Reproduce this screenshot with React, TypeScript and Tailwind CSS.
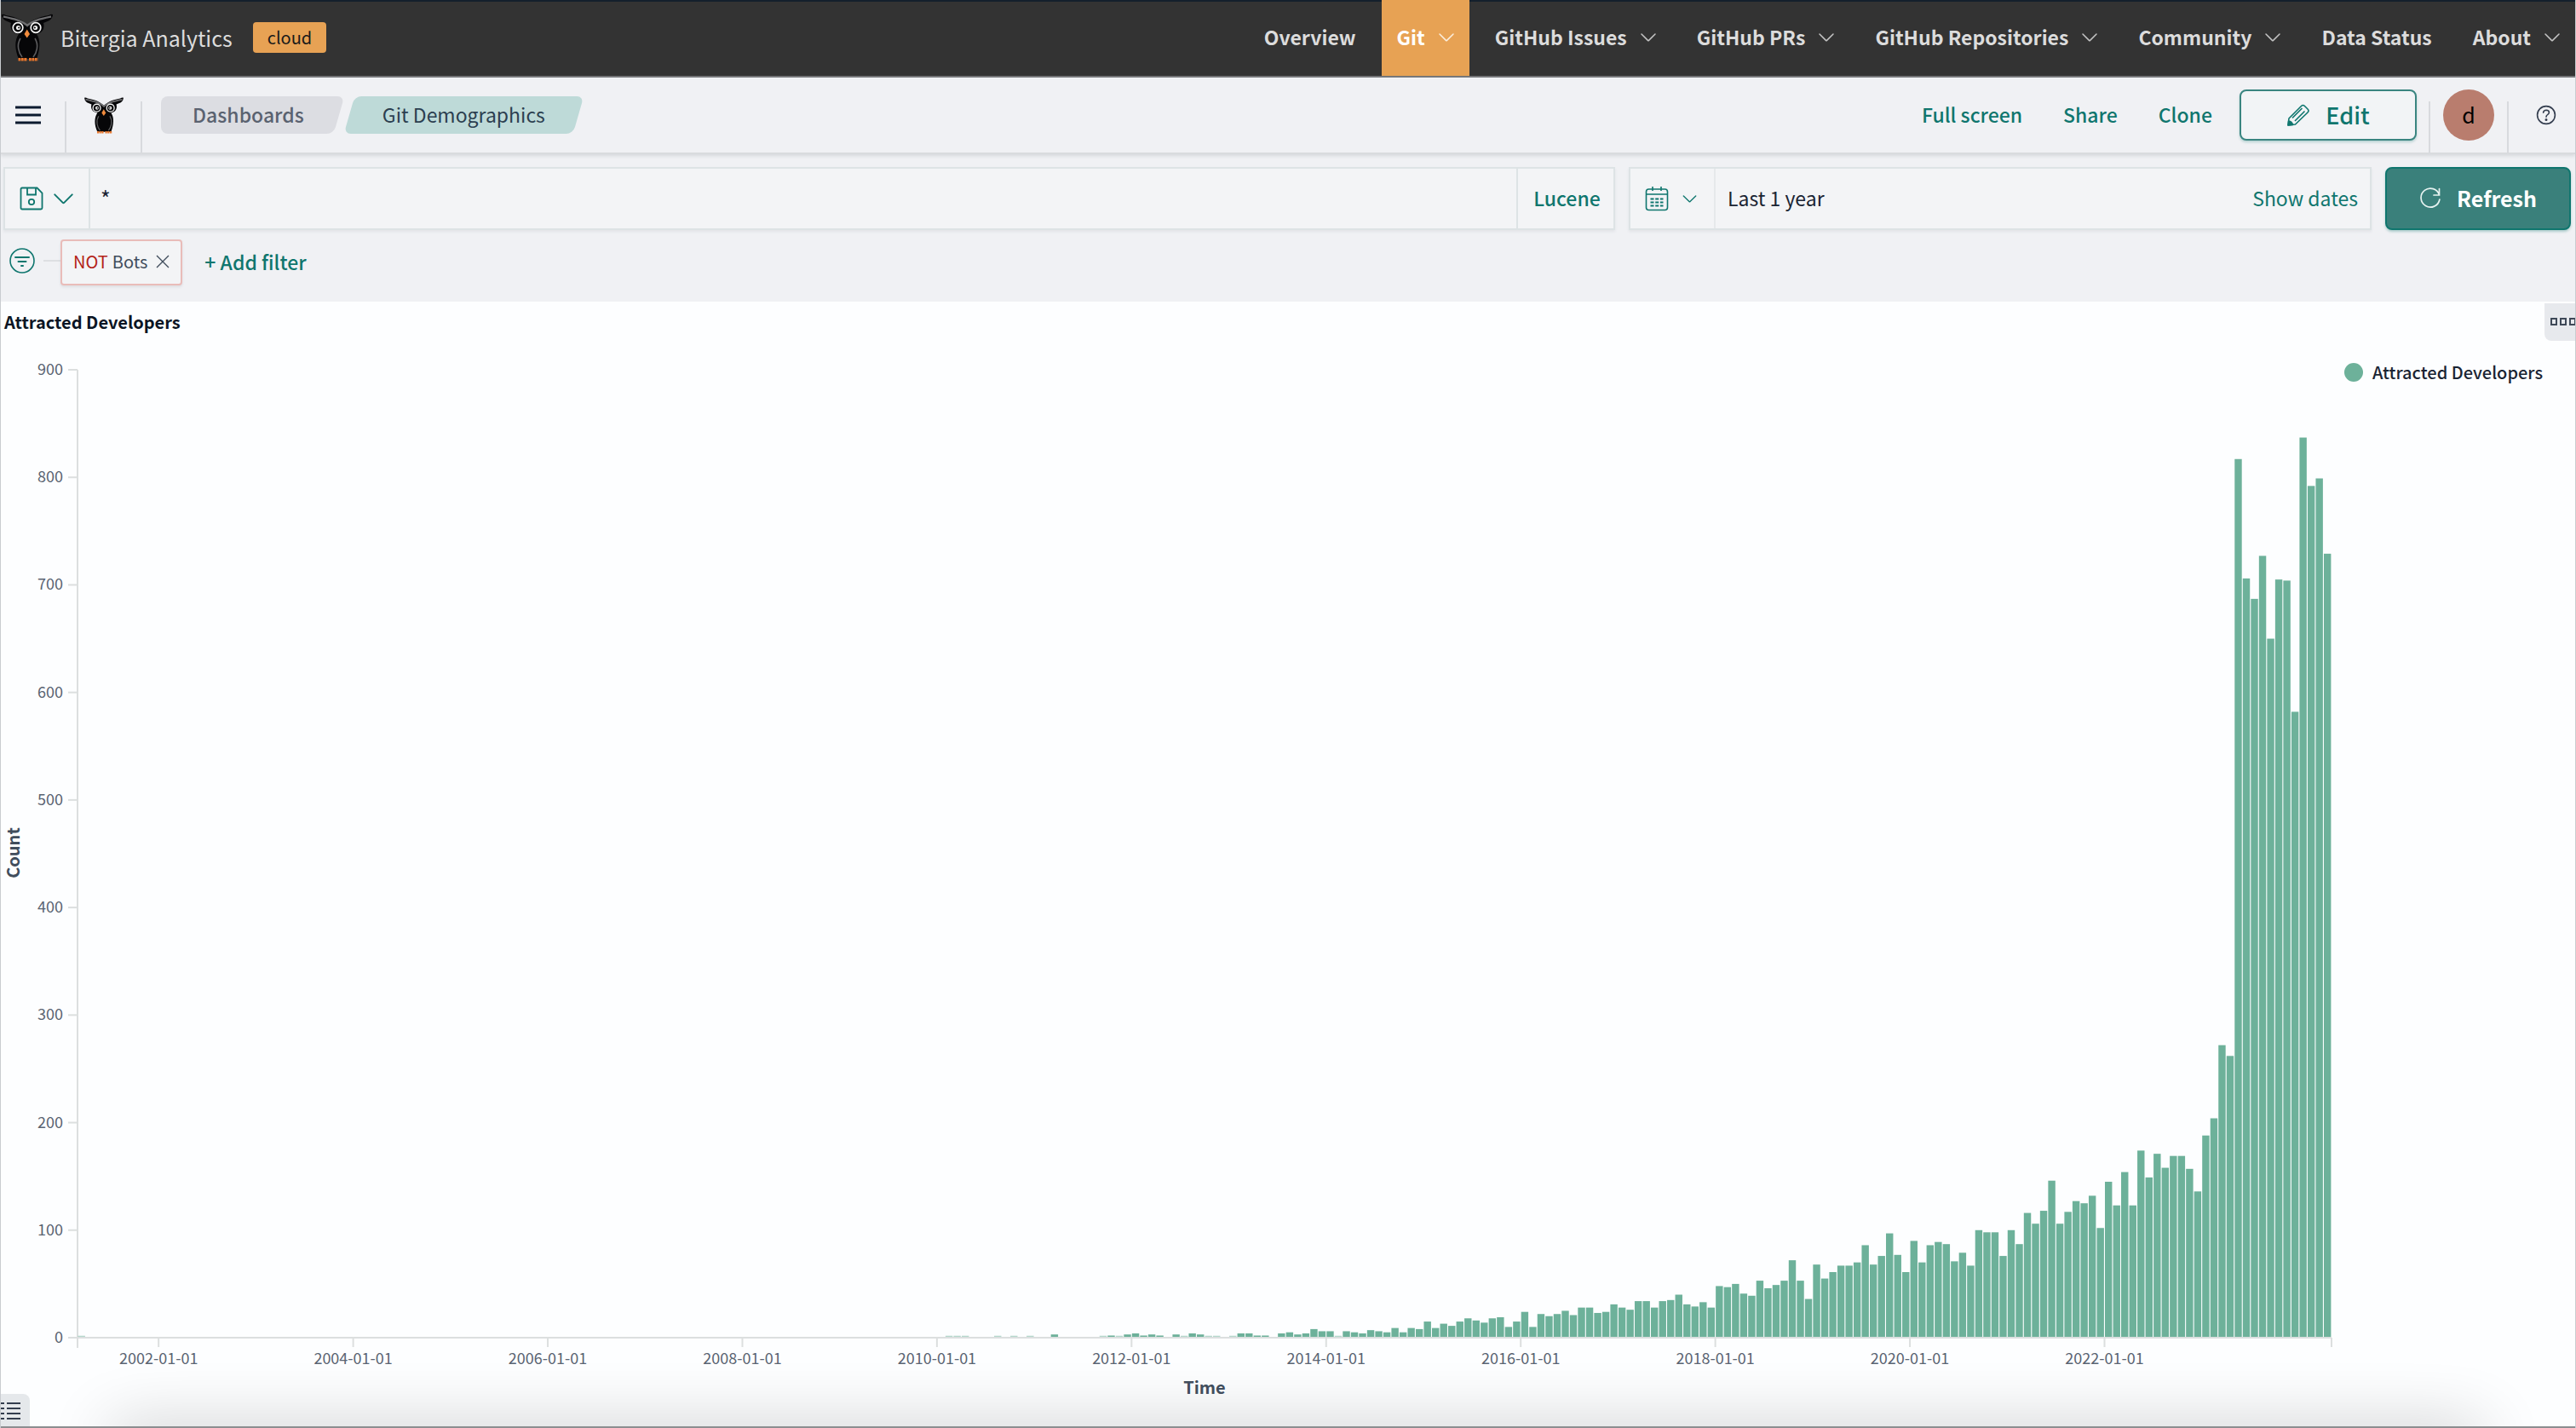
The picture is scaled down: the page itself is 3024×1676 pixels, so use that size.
import React from "react";

const teal = "text-[#0f766e]";

/* Monthly counts, starting March 2001 */
const COUNTS: number[] = [
  1,
  ...Array(9).fill(0), // rest of 2001
  ...Array(96).fill(0), // 2002 - 2009
  0, 1, 1, 1, 0, 0, 0, 1, 0, 1, 0, 1, // 2010
  0, 0, 3, 0, 0, 0, 0, 0, 1, 2, 1, 3, // 2011
  4, 2, 3, 2, 0, 3, 1, 4, 3, 1, 1, 0, // 2012
  1, 4, 4, 2, 2, 0, 4, 5, 3, 4, 8, 6, // 2013
  6, 1, 6, 5, 4, 7, 6, 5, 9, 5, 9, 8, // 2014
  15, 9, 13, 11, 15, 18, 16, 14, 18, 19, 10, 15, // 2015
  24, 10, 22, 20, 22, 25, 21, 28, 28, 23, 24, 31, // 2016
  28, 26, 34, 34, 28, 34, 35, 40, 31, 29, 33, 28, // 2017
  48, 47, 50, 41, 39, 53, 46, 49, 53, 72, 53, 36, // 2018
  68, 55, 61, 67, 67, 70, 86, 68, 76, 97, 77, 61, // 2019
  90, 70, 86, 89, 87, 71, 79, 67, 100, 98, 98, 76, // 2020
  100, 87, 116, 106, 118, 146, 106, 117, 127, 125, 132, 102, // 2021
  145, 123, 154, 123, 174, 149, 171, 158, 169, 169, 157, 136, // 2022
  188, 204, 272, 262, 817, 706, 687, 727, 650, 705, 704, 582, // 2023
  837, 792, 799, 729, // 2024
];

const LEFT = 90;
const RIGHT = 2736;
const BASE = 1216;
const UNIT = 1.2622;
const STEP = (RIGHT - LEFT) / COUNTS.length;

function Chart() {
  const yTicks = [0, 100, 200, 300, 400, 500, 600, 700, 800, 900];
  const years = [2002, 2004, 2006, 2008, 2010, 2012, 2014, 2016, 2018, 2020, 2022];
  return (
    <svg
      viewBox="0 0 2740 1300"
      className="block w-full h-auto"
      role="img"
      aria-label="Attracted Developers by month"
    >
      <g stroke="#dcdfdf" strokeWidth="2">
        <line x1={LEFT} y1={BASE - 900 * UNIT} x2={LEFT} y2={BASE + 12} />
        {yTicks.map((t) => (
          <line key={t} x1={LEFT - 11} x2={LEFT} y1={BASE - t * UNIT} y2={BASE - t * UNIT} />
        ))}
        <line x1={LEFT - 11} x2={RIGHT} y1={BASE} y2={BASE} />
        <line x1={RIGHT} x2={RIGHT} y1={BASE} y2={BASE + 11} />
        {years.map((y) => {
          const x = LEFT + ((y - 2001) * 12 - 2) * STEP;
          return <line key={y} x1={x} x2={x} y1={BASE} y2={BASE + 11} />;
        })}
      </g>
      <g fill="#6db19a">
        {COUNTS.map((c, i) =>
          c > 0 ? (
            <rect
              key={i}
              x={LEFT + i * STEP + 0.5}
              width={STEP - 1.1}
              y={BASE - c * UNIT - (c === 1 ? 1 : 0)}
              height={c * UNIT - (c === 1 ? 0 : 1)}
              opacity={c === 1 ? 0.5 : 1}
            />
          ) : null
        )}
      </g>
      <g className="fill-[#5a6472] text-[18px]">
        {yTicks.map((t) => (
          <text key={t} x="73" y={BASE - t * UNIT + 6} textAnchor="end">
            {t}
          </text>
        ))}
        {years.map((y) => (
          <text key={y} x={LEFT + ((y - 2001) * 12 - 2) * STEP} y={BASE + 31} textAnchor="middle">
            {y}-01-01
          </text>
        ))}
      </g>
      <g className="fill-[#414d5c] text-[20px] font-bold">
        <text x="1413" y="1282" textAnchor="middle">
          Time
        </text>
        <text transform="translate(22 647) rotate(-90)" textAnchor="middle">
          Count
        </text>
      </g>
    </svg>
  );
}

function Owl({ className }: { className: string }) {
  return (
    <svg viewBox="0 0 60 56" className={className} aria-hidden="true">
      <path
        d="M0 1 Q2 0 5 2 C17 4 25 8 30 13 C35 8 43 4 55 2 Q58 0 60 1 Q60 5 56 8 L49 11 C51 18 47 23 41 24 C46 31 45 42 41 53 L20 53 C15 42 15 31 20 24 C13 23 9 18 11 11 L4 8 Q0 5 0 1Z"
        fill="#060608"
      />
      <path d="M2 3.500 C14 6 24 8 30 14 C36 8 46 6 58 3.500" fill="none" stroke="#6e6e70" strokeWidth="2.4" />
      <path d="M22 29 C17 37 20 46 24 51 M39 29 C44 37 41 46 37 51" fill="none" stroke="#5c5c5e" strokeWidth="1.6" />
      <circle cx="19" cy="16.500" r="5.800" fill="#060608" stroke="#f4f4f4" strokeWidth="1.700" />
      <circle cx="40" cy="16.500" r="5.800" fill="#060608" stroke="#f4f4f4" strokeWidth="1.700" />
      <circle cx="19.500" cy="16.500" r="2.600" fill="#f4f4f4" />
      <circle cx="39.500" cy="16.500" r="2.600" fill="#f4f4f4" />
      <circle cx="20.200" cy="16.500" r="1.100" fill="#111" />
      <circle cx="38.800" cy="16.500" r="1.100" fill="#111" />
      <path d="M29.700 18.500 L33 24 L29.700 28.500 L26.500 24Z" fill="#ef8a3c" />
      <path d="M19.500 53.700 H30 M32 53.700 H42.500" stroke="#e8762c" strokeWidth="3.4" strokeDasharray="2.8 .6" />
    </svg>
  );
}

function Chevron({ className }: { className: string }) {
  return (
    <svg viewBox="0 0 18 10" className={className} fill="none" stroke="currentColor" strokeLinecap="round" strokeLinejoin="round" aria-hidden="true">
      <path d="M1 1 L8.4 8.4 Q9 9 9.6 8.4 L17 1" strokeWidth="1.5" />
    </svg>
  );
}

const NAV = [
  { label: "Overview" },
  { label: "Git", menu: true, active: true },
  { label: "GitHub Issues", menu: true },
  { label: "GitHub PRs", menu: true },
  { label: "GitHub Repositories", menu: true },
  { label: "Community", menu: true },
  { label: "Data Status" },
  { label: "About", menu: true },
];

function TopBar() {
  return (
    <header className="flex h-[91px] items-stretch justify-between border-t-2 border-b-2 border-t-[#14202c] border-b-[#77777a] bg-[#333333]">
      <div className="flex items-center pb-1">
        <Owl className="h-[56px] w-[62px]" />
        <span className="ml-2 text-[25px] leading-9 text-[#dcdcdc]">Bitergia Analytics</span>
        <span className="ml-6 rounded-[4px] bg-[#e7a254] px-[17px] text-[20px] leading-9 text-[#1a1a1a]">cloud</span>
      </div>
      <nav className="-mt-[2px] flex gap-3">
        {NAV.map((n) => (
          <button
            key={n.label}
            type="button"
            className={
              n.active
                ? "flex items-center gap-4 bg-[#e7a254] px-[18px] pb-[2px] text-[23px] font-bold text-white"
                : "flex items-center gap-4 px-[18px] pb-[2px] text-[23px] font-bold text-[#dcdcdc]"
            }
          >
            {n.label}
            {n.menu && <Chevron className={n.active ? "h-[10px] w-[18px] text-[#fbeedd]" : "h-[10px] w-[18px] text-[#c4c4c4]"} />}
          </button>
        ))}
      </nav>
    </header>
  );
}

function HeaderBar() {
  return (
    <div className="relative z-10 flex h-[90px] items-stretch border-b-2 border-[#d9dbde] bg-[#f0f1f4] shadow-[0_2px_4px_rgba(60,70,80,0.14)]">
      <button type="button" aria-label="Menu" className="flex w-[75px] items-center pl-[17px]">
        <svg viewBox="0 0 30 22" className="h-[22px] w-[30px]" stroke="#0b1a2e" strokeWidth="3" aria-hidden="true">
          <path d="M0 2 H30 M0 11 H30 M0 20 H30" />
        </svg>
      </button>
      <div className="mt-7 w-[2px] bg-[#d8dade]" />
      <a href="#" aria-label="Home" className="flex w-[87px] items-center justify-center">
        <Owl className="h-[43px] w-[46px]" />
      </a>
      <div className="mt-7 w-[2px] bg-[#d8dade]" />
      <nav aria-label="Breadcrumb" className="ml-[22px] flex items-center gap-1">
        <a href="#" className="relative isolate flex h-11 items-center pr-[47px] pb-[2px] pl-[37px] text-[23px] font-medium text-[#5a6270]">
          <span className="absolute inset-y-0 left-0 -z-10 w-1/2 rounded-l-[8px] bg-[#dcdde2]" />
          <span className="absolute inset-y-0 right-[6px] left-1/4 -z-10 -skew-x-[16deg] rounded-r-[8px] bg-[#dcdde2]" />
          Dashboards
        </a>
        <span className="relative isolate flex h-11 items-center px-[41px] pb-[2px] text-[23px] text-[#2c3f50]">
          <span className="absolute inset-y-0 right-[2px] left-[2px] -z-10 -skew-x-[16deg] rounded-[8px] bg-[#bedad8]" />
          Git Demographics
        </span>
      </nav>
      <div className={`ml-auto flex items-center text-[23px] font-medium ${teal}`}>
        <button type="button" className="mr-12 pb-[2px]">Full screen</button>
        <button type="button" className="mr-12 pb-[2px]">Share</button>
        <button type="button" className="mr-8 pb-[2px]">Clone</button>
        <button type="button" className="flex h-[60px] w-[208px] items-center justify-center gap-[18px] rounded-[8px] border-2 border-[#3a8580] bg-[#f2f4f6] text-[27px] shadow-[0_2px_3px_rgba(15,118,110,0.25)]">
          <svg viewBox="0 0 28 28" className="h-7 w-7" fill="none" stroke="currentColor" strokeWidth="1.6" strokeLinejoin="round" aria-hidden="true">
            <path d="M2 26 L3 18 L17.5 3.5 Q19.5 1.5 21.5 3.5 L25 7 Q27 9 25 11 L10.500 25 Z M7 17.500 L18.500 6 M10 21 L21.500 9.500" />
            <path d="M2 26 L2.600 21 Q6.500 21.500 7.500 25.500 Z" fill="currentColor" />
          </svg>
          Edit
        </button>
      </div>
      <div className="mt-7 ml-[14px] w-[2px] bg-[#d8dade]" />
      <div className="flex items-center px-[15px]">
        <button type="button" className="h-[60px] w-[60px] rounded-full bg-[#b97d6e] text-[25px] text-black">d</button>
      </div>
      <div className="mt-7 w-[2px] bg-[#d8dade]" />
      <button type="button" aria-label="Help" className="flex w-[78px] items-center justify-center pl-[10px]">
        <svg viewBox="0 0 24 24" className="h-6 w-6" fill="none" stroke="#333d4e" strokeWidth="1.6" strokeLinecap="round" aria-hidden="true">
          <circle cx="12" cy="12" r="10.400" />
          <path d="M8.600 9.200 Q9 6.200 12.200 6.200 Q15.400 6.400 15.400 9 Q15.400 10.600 13.600 11.600 Q12 12.500 12 14.200" />
          <circle cx="12" cy="17.600" r=".7" fill="#333d4e" />
        </svg>
      </button>
    </div>
  );
}

function QueryBar() {
  const box = "flex h-[74px] items-stretch border-2 border-[#dde3e5] bg-[#f3f4f6] shadow-[0_2px_3px_rgba(60,80,90,0.08)]";
  return (
    <div className="flex gap-4 pt-[15px] pr-[5px] pl-[3px]">
      <div className={`${box} flex-1`}>
        <button type="button" aria-label="Saved queries" className={`flex w-[100px] items-center gap-3 border-r-2 border-[#dde3e5] pl-[17px] ${teal}`}>
          <svg viewBox="0 0 28 28" className="h-7 w-7" fill="none" stroke="currentColor" strokeWidth="1.8" aria-hidden="true">
            <path d="M3 1.500 H20.500 L26.500 7.500 V25 Q26.500 26.500 25 26.500 H3 Q1.500 26.500 1.500 25 V3 Q1.500 1.500 3 1.500Z M9 1.500 V9.500 H19 V1.500" />
            <circle cx="14" cy="18" r="3.200" />
          </svg>
          <Chevron className="h-[13px] w-[23px]" />
        </button>
        <input aria-label="Query" defaultValue="*" className="min-w-0 flex-1 bg-transparent px-3 text-[25px] text-[#1a2433] outline-none" />
        <button type="button" className={`w-[114px] border-l-2 border-[#dde3e5] pb-[2px] pl-[3px] text-[23px] font-medium ${teal}`}>Lucene</button>
      </div>
      <div className={`${box} w-[872px]`}>
        <button type="button" aria-label="Date quick select" className={`flex w-[100px] items-center gap-4 border-r-2 border-[#e6e9eb] pl-[17px] ${teal}`}>
          <svg viewBox="0 0 28 30" className="h-[30px] w-7" fill="none" stroke="currentColor" strokeWidth="1.600" aria-hidden="true">
            <rect x="1.500" y="4" width="25" height="24.500" rx="3" />
            <path d="M1.500 10 H26.500 M9 1 V6 M19 1 V6" />
            <path d="M6.500 15.500 H21.500 M6.500 19.500 H21.500 M6.500 23.500 H21.500" strokeWidth="2" strokeDasharray="4 1.700" />
          </svg>
          <Chevron className="h-[9px] w-[17px]" />
        </button>
        <button type="button" className="flex-1 px-[14px] pb-[2px] text-left text-[23px] text-[#1a2433]">Last 1 year</button>
        <button type="button" className={`px-[14px] pb-[2px] text-[23px] ${teal}`}>Show dates</button>
      </div>
      <button type="button" className="flex h-[74px] w-[218px] items-center justify-center gap-[18px] rounded-[8px] border-2 border-[#0f766e] bg-[#3a807b] text-[25px] font-bold text-white shadow-[0_2px_3px_rgba(15,118,110,0.3)]">
        <svg viewBox="0 0 26 26" className="h-[26px] w-[26px]" fill="none" stroke="#e6f2f0" strokeWidth="1.700" strokeLinecap="round" aria-hidden="true">
          <path d="M17 9 H23.500 V1.500 M23.600 9 A11 11 0 1 0 23.900 14" />
        </svg>
        Refresh
      </button>
    </div>
  );
}

function FilterBar() {
  return (
    <div className="flex h-[84px] items-start pt-[10px] pl-[10px]">
      <div className="flex h-14 items-center">
        <button type="button" aria-label="Filter options" className={`-mt-1 ${teal}`}>
          <svg viewBox="0 0 30 30" className="block h-[30px] w-[30px]" fill="none" stroke="currentColor" strokeWidth="1.600" strokeLinecap="round" aria-hidden="true">
            <circle cx="15" cy="15" r="14" />
            <path d="M7 11 H23 M10.500 16 H19.500 M14 21 H16" strokeWidth="2" />
          </svg>
        </button>
        <div className="-mt-1 ml-[10px] h-[2px] w-5 bg-[#dddfe2]" />
        <div className="flex h-[54px] items-center rounded-[4px] border-2 border-[#e9bcb9] bg-[#f3f4f6] px-[13px] pb-[2px] text-[20px] text-[#414d5c] shadow-[0_2px_3px_rgba(60,70,80,0.1)]">
          <span className="mr-[5px] text-[#b42318]">NOT</span>
          Bots
          <button type="button" aria-label="Remove filter" className="ml-[10px]">
            <svg viewBox="0 0 16 16" className="block h-4 w-4" stroke="#414d5c" strokeWidth="1.400" aria-hidden="true">
              <path d="M1 1 L15 15 M15 1 L1 15" />
            </svg>
          </button>
        </div>
        <button type="button" className={`ml-[26px] pb-[2px] text-[23px] font-medium ${teal}`}>+ Add filter</button>
      </div>
    </div>
  );
}

export default function App() {
  return (
    <div className="relative flex min-h-screen flex-col overflow-hidden border-x border-[#c9ccd0] bg-[#f0f1f4] font-['Noto_Sans_CJK_JP','Source_Sans_Pro',sans-serif]">
      <TopBar />
      <HeaderBar />
      <QueryBar />
      <FilterBar />
      <main className="relative flex flex-1 flex-col bg-[#fdfeff]">
        <div className="absolute inset-x-0 bottom-0 h-24 overflow-hidden">
          <div className="absolute top-full right-[110px] left-[130px] h-10 shadow-[0_0_76px_rgba(0,0,0,0.24)]" />
        </div>
        <div className="relative flex h-0 items-start justify-between">
          <h2 className="pt-2 pl-1 text-[20px] leading-8 font-bold text-[#0b1524]">Attracted Developers</h2>
          <button type="button" aria-label="Panel options" className="mt-[2px] h-11 w-[36px] overflow-hidden rounded-bl-[8px] bg-[#e7e9ed] pl-[7px]">
            <svg viewBox="0 0 32 10" className="h-[10px] w-8 max-w-none" fill="none" stroke="#3f4958" strokeWidth="2" aria-hidden="true">
              <path d="M1 1 H7 V8 H1Z M12 1 H18 V8 H12Z M23 1 H29 V8 H23Z" />
            </svg>
          </button>
        </div>
        <div className="relative flex items-start">
          <div className="min-w-0 flex-1">
            <Chart />
          </div>
          <div className="flex w-[282px] items-center gap-[11px] pt-[67px] pl-[11px]">
            <span className="h-[22px] w-[22px] rounded-full bg-[#6db19a]" />
            <span className="text-[20px] leading-8 font-medium text-[#1a2433]">Attracted Developers</span>
          </div>
        </div>
        <button type="button" aria-label="Toggle legend" className="absolute bottom-0 left-0 flex h-10 w-[34px] items-center rounded-tr-[8px] bg-[#e5e8eb]">
          <svg viewBox="0 0 24 22" className="h-[22px] w-6" stroke="#333d4e" strokeWidth="2" aria-hidden="true">
            <path d="M0 2 H4 M7 2 H23 M0 8 H4 M7 8 H23 M0 14 H4 M7 14 H23 M0 20 H4 M7 20 H23" />
          </svg>
        </button>
        <div className="absolute inset-x-0 bottom-0 h-[2px] bg-[#8c8e90]" />
      </main>
    </div>
  );
}
